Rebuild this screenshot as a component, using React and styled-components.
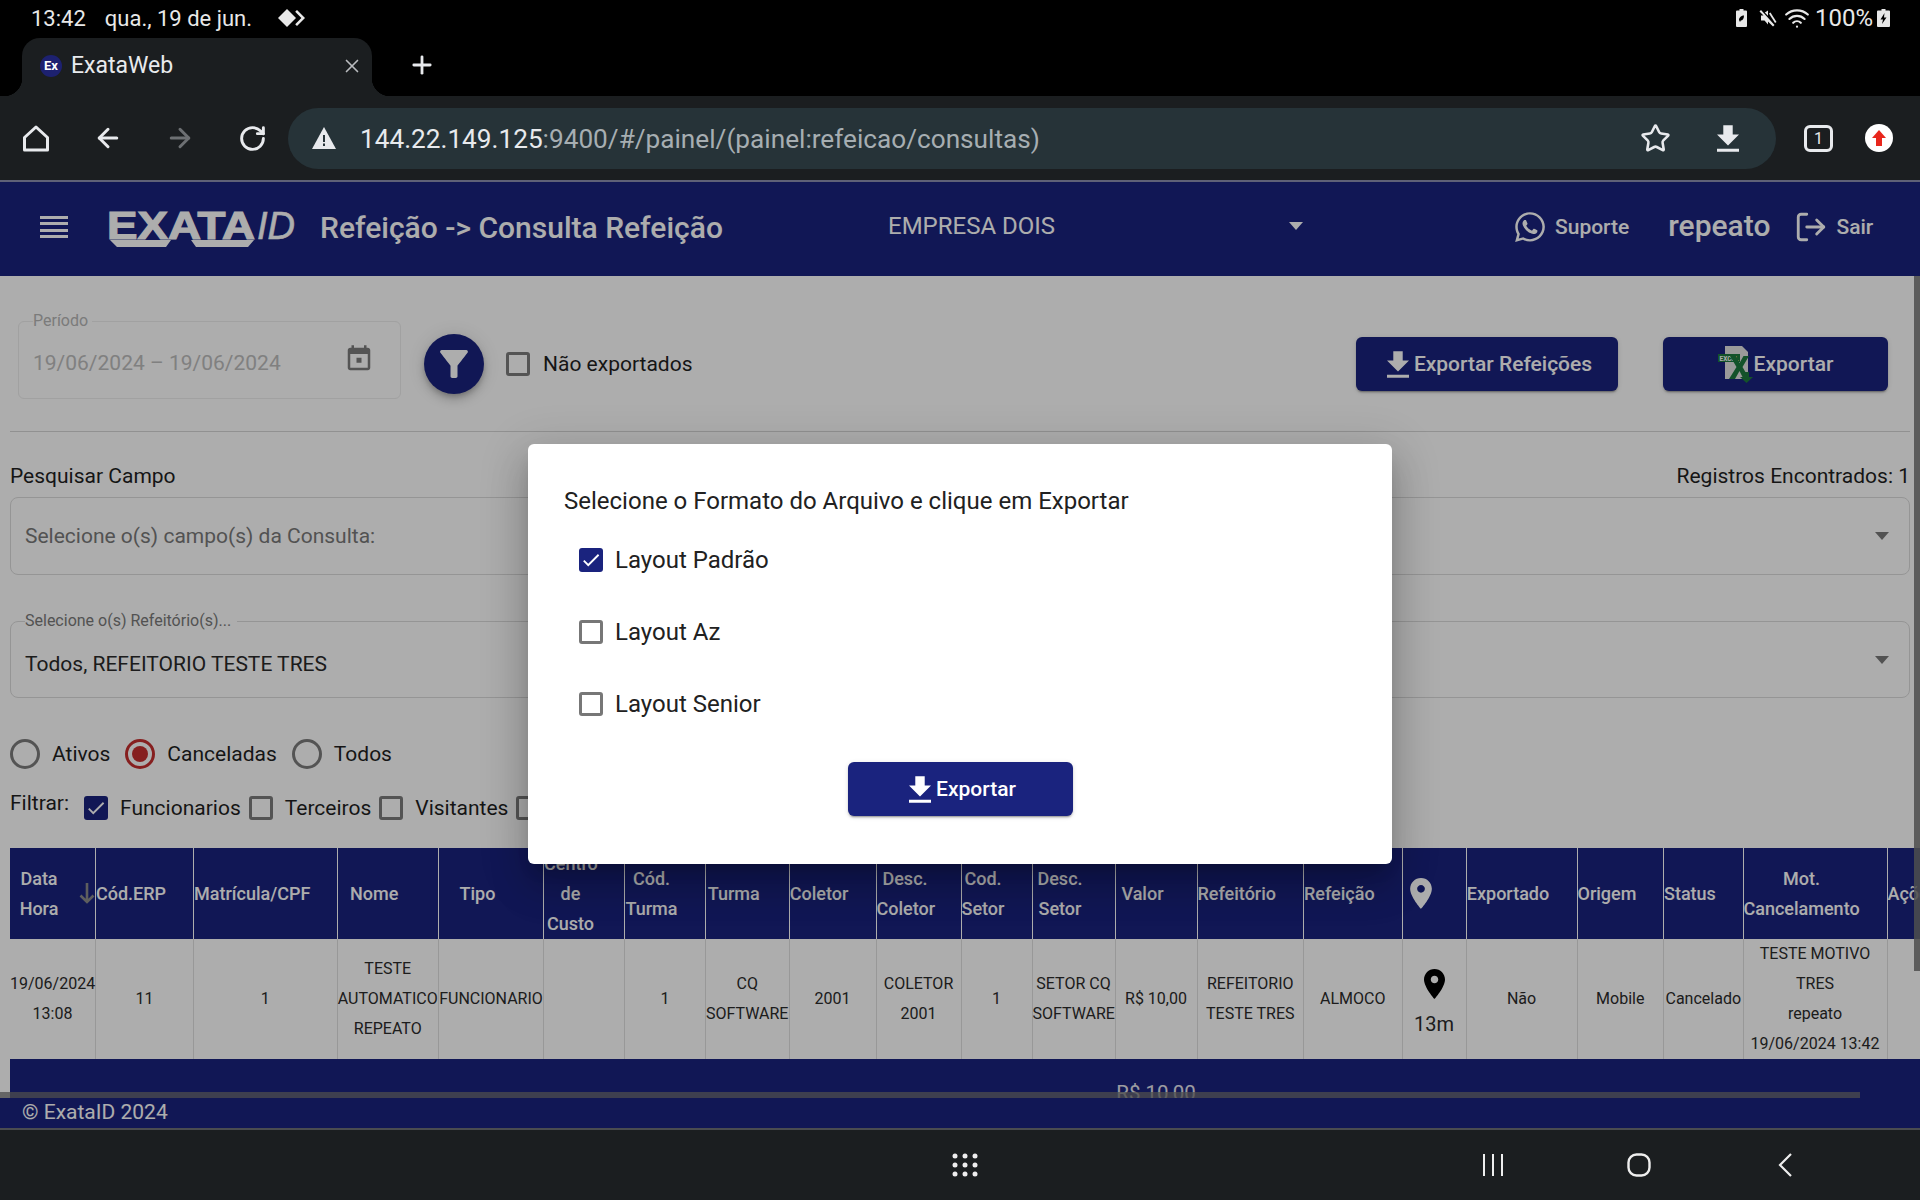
import React from 'react'
import styled, { createGlobalStyle } from 'styled-components'
import { ArrowLeft, ArrowRight, RotateCw, Star, X, Plus, LogOut, Wifi } from 'lucide-react'
import { FaWhatsapp } from 'react-icons/fa'

const GlobalStyle = createGlobalStyle`
  html, body { margin: 0; padding: 0; background: #000; }
  * { box-sizing: border-box; }
  body { font-family: Roboto, "Noto Sans", sans-serif; }
`

const NAVY = '#1a237e'

const columns = [
  { w: 85.5, head: ['Data', 'Hora'], body: ['19/06/2024', '13:08'], sort: true },
  { w: 98, head: ['Cód.ERP'], body: ['11'] },
  { w: 143.5, head: ['Matrícula/CPF'], body: ['1'] },
  { w: 101.5, head: ['Nome'], body: ['TESTE', 'AUTOMATICO', 'REPEATO'] },
  { w: 105, head: ['Tipo'], body: ['FUNCIONARIO'] },
  { w: 81, head: ['Centro', 'de', 'Custo'], body: [] },
  { w: 81, head: ['Cód.', 'Turma'], body: ['1'] },
  { w: 83.5, head: ['Turma'], body: ['CQ', 'SOFTWARE'] },
  { w: 87, head: ['Coletor'], body: ['2001'] },
  { w: 85, head: ['Desc.', 'Coletor'], body: ['COLETOR', '2001'] },
  { w: 71, head: ['Cod.', 'Setor'], body: ['1'] },
  { w: 83, head: ['Desc.', 'Setor'], body: ['SETOR CQ', 'SOFTWARE'] },
  { w: 82, head: ['Valor'], body: ['R$ 10,00'], total: 'R$ 10,00' },
  { w: 106.5, head: ['Refeitório'], body: ['REFEITORIO', 'TESTE TRES'] },
  { w: 98.5, head: ['Refeição'], body: ['ALMOCO'] },
  { w: 64, pin: true },
  { w: 111, head: ['Exportado'], body: ['Não'] },
  { w: 86.5, head: ['Origem'], body: ['Mobile'] },
  { w: 79.5, head: ['Status'], body: ['Cancelado'] },
  { w: 144, head: ['Mot.', 'Cancelamento'], body: ['TESTE MOTIVO', 'TRES', 'repeato', '19/06/2024 13:42'] },
  { w: 76, head: ['Ações'], body: [] },
]

const tableWidth = columns.reduce((sum, c) => sum + c.w, 0)

const Screen = styled.div`
  width: 1920px;
  height: 1200px;
  display: flex;
  flex-direction: column;
  overflow: hidden;
  background: #000;
`

/* tablet status bar */
const StatusBar = styled.div`
  height: 38px;
  flex: none;
  display: flex;
  align-items: center;
  padding: 0 30px 2px 31px;
  color: #e8e8e8;
  font-size: 22px;
`
const StatusDate = styled.span`
  margin-left: 19px;
  margin-right: 26px;
`
const StatusRight = styled.div`
  margin-left: auto;
  display: flex;
  align-items: center;
  gap: 9px;
`
const StatusIcon = styled.svg`
  margin-right: ${p => p.$after || 0}px;
  fill: #e8e8e8;
`
const WifiIcon = styled(Wifi)`
  margin: 0 -2px;
`
const Percent = styled.span`
  margin: 0 -5px 0 -2px;
  font-size: 24px;
`

/* browser */
const TabStrip = styled.div`
  height: 58px;
  flex: none;
  display: flex;
  align-items: stretch;
  padding-left: 22px;
`
const Tab = styled.div`
  position: relative;
  width: 350px;
  display: flex;
  align-items: center;
  padding: 0 9px 3px 18px;
  background: #1b1e20;
  border-radius: 18px 18px 0 0;
  color: #e8eaed;
  font-size: 23px;
  &::before, &::after {
    content: '';
    position: absolute;
    bottom: 0;
    width: 18px;
    height: 18px;
  }
  &::before { left: -18px; background: radial-gradient(circle at 0 0, transparent 18px, #1b1e20 18.5px); }
  &::after { right: -18px; background: radial-gradient(circle at 100% 0, transparent 18px, #1b1e20 18.5px); }
`
const Favicon = styled.span`
  width: 22px;
  height: 22px;
  margin-right: 9px;
  border-radius: 50%;
  background: #1d2170;
  color: #fff;
  font-size: 13px;
  font-weight: 700;
  display: flex;
  align-items: center;
  justify-content: center;
`
const TabClose = styled(X)`
  margin-left: auto;
  color: #b9bcbf;
`
const NewTab = styled(Plus)`
  color: #e8eaed;
  margin: 13px 0 0 36px;
`
const Toolbar = styled.div`
  height: 84px;
  flex: none;
  display: flex;
  align-items: center;
  background: #1b1e20;
`
const ToolIcon = styled.span`
  flex: none;
  display: flex;
  justify-content: center;
  width: 72px;
  color: ${p => p.$off ? '#6d7073' : '#e8eaed'};
`
const UrlBar = styled.div`
  width: 1488px;
  height: 61px;
  flex: none;
  display: flex;
  align-items: center;
  margin-right: 7px;
  padding: 0 37px 0 24px;
  border-radius: 31px;
  background: #263338;
  font-size: 26.2px;
  color: #a6aeb2;
`
const UrlHost = styled.span`
  color: #e8eaed;
`
const UrlText = styled.span`
  margin: 1px 0 0 24px;
`
const UrlActions = styled.div`
  margin-left: auto;
  display: flex;
  align-items: center;
  gap: 46px;
  color: #e8eaed;
`
const TabCount = styled.span`
  width: 29px;
  height: 27px;
  margin-left: 21px;
  flex: none;
  display: flex;
  align-items: center;
  justify-content: center;
  border: 3px solid #e8eaed;
  border-radius: 6px;
  color: #e8eaed;
  font-size: 16px;
`
const Avatar = styled.span`
  width: 28px;
  height: 28px;
  margin-left: 32px;
  flex: none;
  display: flex;
  align-items: center;
  justify-content: center;
  border-radius: 50%;
  background: #fff;
  color: #e8261c;
`

/* web app */
const AppArea = styled.div`
  position: relative;
  flex: 1;
  min-height: 0;
  display: flex;
  flex-direction: column;
  background: #fff;
`
const Overlay = styled.div`
  position: absolute;
  inset: 0;
  z-index: 5;
  display: flex;
  align-items: center;
  justify-content: center;
  background: rgba(0, 0, 0, 0.32);
`
const AppHeader = styled.header`
  height: 96px;
  flex: none;
  display: flex;
  align-items: center;
  padding-bottom: 4px;
  border-top: 2px solid #8d90b0;
  background: ${NAVY};
  color: #fff;
`
const Burger = styled.span`
  width: 28px;
  height: 22px;
  margin-left: 40px;
  flex: none;
  background: repeating-linear-gradient(to bottom, #fff 0 3px, transparent 3px 6.3px);
`
const Logo = styled.svg`
  width: 190px;
  height: 40px;
  margin: 4px 0 0 39px;
  flex: none;
  fill: #fff;
  overflow: visible;
`
const PageTitle = styled.h1`
  margin: 0 0 0 23px;
  width: 568px;
  flex: none;
  font-size: 30px;
  font-weight: 500;
  white-space: nowrap;
`
const Company = styled.div`
  width: 415px;
  flex: none;
  display: flex;
  align-items: center;
  justify-content: space-between;
  margin-top: -2px;
  font-size: 24px;
`
const Caret = styled.span`
  width: 0;
  height: 0;
  border-left: 7px solid transparent;
  border-right: 7px solid transparent;
  border-top: 8px solid ${p => p.$color || '#fff'};
`
const HeaderLink = styled.span`
  display: flex;
  align-items: center;
  gap: 8px;
  font-size: 21px;
  font-weight: 500;
`
const SupportLink = styled(HeaderLink)`
  margin-left: 210px;
`
const UserName = styled.span`
  margin-left: 39px;
  margin-top: -4px;
  font-size: 30px;
  font-weight: 500;
`
const ExitLink = styled(HeaderLink)`
  margin-left: 24px;
`

const Content = styled.main`
  position: relative;
  flex: 1;
  min-height: 0;
  overflow: hidden;
  padding: 0 10px;
  color: #1f1f1f;
  font-size: 21px;
`
const TopRow = styled.div`
  display: flex;
  align-items: flex-start;
  padding: 45px 22px 32px 8px;
  border-bottom: 1px solid #d6d6d6;
`
const PeriodBox = styled.div`
  position: relative;
  width: 383px;
  height: 78px;
  flex: none;
  display: flex;
  align-items: center;
  justify-content: space-between;
  padding: 5px 26px 0 14px;
  border: 1px solid #ededed;
  border-radius: 6px;
  color: #bdbdbd;
`
const FloatLabel = styled.span`
  position: absolute;
  top: -10px;
  left: ${p => p.$left || 14}px;
  padding: 0 ${p => p.$pad || 4}px 0 0;
  background: #fff;
  font-size: 16px;
  line-height: 18px;
  color: ${p => p.$color || '#b5b5b5'};
`
const CalendarIcon = styled.svg`
  margin-top: -7px;
  fill: #7c7c7c;
`
const FilterButton = styled.span`
  width: 60px;
  height: 60px;
  margin: 13px 0 0 23px;
  flex: none;
  display: flex;
  align-items: center;
  justify-content: center;
  border-radius: 50%;
  background: ${NAVY};
  color: #fff;
  box-shadow: 0 3px 5px -1px rgba(0,0,0,.2), 0 6px 10px rgba(0,0,0,.14), 0 1px 18px rgba(0,0,0,.12);
`
const NotExported = styled.label`
  margin: 31px 0 0 22px;
  display: flex;
  align-items: center;
  gap: 13px;
`
const BoxMark = styled.span`
  width: 24px;
  height: 24px;
  flex: none;
  display: flex;
  align-items: center;
  justify-content: center;
  border-radius: 3px;
  border: ${p => p.$checked ? 'none' : `3px solid ${p.$edge || '#7c7c7c'}`};
  background: ${p => p.$checked ? NAVY : 'transparent'};
  color: #fff;
`
const ActionGroup = styled.div`
  margin: 16px 0 0 auto;
  display: flex;
  gap: 45px;
`
const NavyButton = styled.button`
  width: ${p => p.$w}px;
  height: 54px;
  display: flex;
  align-items: center;
  justify-content: center;
  gap: ${p => p.$gap ?? 5}px;
  padding: 0 0 0 ${p => p.$pad ?? 5}px;
  border: none;
  border-radius: 6px;
  background: ${NAVY};
  color: #fff;
  font-family: inherit;
  font-size: 21px;
  font-weight: 500;
  box-shadow: 0 3px 1px -2px rgba(0,0,0,.2), 0 2px 2px rgba(0,0,0,.14), 0 1px 5px rgba(0,0,0,.12);
`
const SearchHead = styled.div`
  display: flex;
  justify-content: space-between;
  padding: 32px 0 9px;
  line-height: 24px;
`
const SelectBox = styled.div`
  position: relative;
  height: ${p => p.$h}px;
  margin-top: ${p => p.$top || 0}px;
  display: flex;
  align-items: center;
  justify-content: space-between;
  padding: ${p => p.$drop || 0}px 20px 0 14px;
  border: 1px solid #dcdcdc;
  border-radius: 8px;
  color: ${p => p.$muted ? '#7a7a7a' : '#2a2a2a'};
`
const SelectCaret = styled(Caret)`
  margin-top: ${p => -(p.$drop || 0)}px;
`
const RadioRow = styled.div`
  display: flex;
  align-items: center;
  margin-top: 41px;
  height: 30px;
`
const RadioItem = styled.label`
  display: flex;
  align-items: center;
  gap: 12px;
  margin-right: 15px;
`
const RadioMark = styled.span`
  width: 30px;
  height: 30px;
  display: flex;
  align-items: center;
  justify-content: center;
  border-radius: 50%;
  border: 3px solid ${p => p.$on ? '#c62f2f' : '#7c7c7c'};
  &::after {
    content: '';
    width: 16px;
    height: 16px;
    border-radius: 50%;
    background: ${p => p.$on ? '#c62f2f' : 'transparent'};
  }
`
const FilterRow = styled.div`
  display: flex;
  align-items: center;
  margin-top: 24px;
  height: 30px;
`
const FilterLabel = styled.span`
  margin: -10px 15px 0 0;
`
const CheckItem = styled.label`
  display: flex;
  align-items: center;
  gap: 12px;
  margin-right: 8px;
`
const TableWrap = styled.div`
  margin-top: 25px;
`
const Table = styled.table`
  table-layout: fixed;
  border-collapse: collapse;
  font-size: 16px;
`
const HeadCell = styled.th`
  position: relative;
  height: 91px;
  padding: 0 27px 0 0;
  background: ${NAVY};
  border-left: 1px solid #fff;
  color: #fff;
  font-size: 18px;
  font-weight: 500;
  line-height: 30px;
  white-space: nowrap;
  &:first-child { border-left: none; }
`
const BodyCell = styled.td`
  height: 120px;
  padding: 0;
  border-left: 1px solid #e0e0e0;
  color: #2b2b2b;
  text-align: center;
  line-height: 30px;
  white-space: nowrap;
  &:first-child { border-left: none; }
`
const TotalCell = styled.td`
  height: 68px;
  padding: 0;
  background: ${NAVY};
  color: #e6e6ee;
  font-size: 20.5px;
  text-align: center;
  white-space: nowrap;
`
const Line = styled.div``
const SortArrow = styled.svg`
  position: absolute;
  right: 0;
  top: 34px;
  color: #8b8b8b;
`
const Distance = styled.div`
  margin: 10px 0 -10px;
  font-size: 20px;
  line-height: 30px;
`
const PinShape = styled.svg`
  display: block;
  margin: 0 auto;
`
const HScroll = styled.div`
  position: absolute;
  left: 0;
  bottom: 0;
  width: 1860px;
  height: 6px;
  background: rgba(115, 115, 115, 0.75);
`
const VScroll = styled.div`
  position: absolute;
  right: 0;
  top: 0;
  width: 6px;
  height: 695px;
  background: rgba(115, 115, 115, 0.85);
`
const AppFooter = styled.footer`
  height: 30px;
  flex: none;
  display: flex;
  align-items: center;
  padding: 0 0 2px 22px;
  background: ${NAVY};
  color: #fff;
  font-size: 21px;
`

/* dialog */
const Dialog = styled.div`
  width: 864px;
  height: 420px;
  padding: 40px 36px 0;
  border-radius: 6px;
  background: #fff;
  color: #212121;
  box-shadow: 0 11px 15px -7px rgba(0,0,0,.2), 0 24px 38px 3px rgba(0,0,0,.14), 0 9px 46px 8px rgba(0,0,0,.12);
`
const DialogTitle = styled.div`
  font-size: 24px;
  line-height: 34px;
`
const OptionList = styled.div`
  margin-top: 30px;
  padding-left: 15px;
  display: flex;
  flex-direction: column;
  gap: 48px;
`
const Option = styled.label`
  height: 24px;
  display: flex;
  align-items: center;
  gap: 12px;
  font-size: 24px;
`
const DialogFoot = styled.div`
  margin-top: 46px;
  display: flex;
  justify-content: center;
`

/* android nav bar */
const NavBar = styled.div`
  height: 72px;
  flex: none;
  display: flex;
  align-items: center;
  padding-left: 952px;
  border-top: 2px solid #4a4c50;
  background: #1b1e20;
  color: #eee;
`
const NavIcon = styled.svg`
  margin-left: ${p => p.$gap || 0}px;
  flex: none;
`

const DownloadIcon = () => (
  <svg width="22" height="27" viewBox="5 3 14 17" fill="currentColor">
    <path d="M19 9h-4V3H9v6H5l7 7 7-7zM5 18v2h14v-2H5z" />
  </svg>
)

const CheckMark = () => (
  <svg width="22" height="22" viewBox="0 0 24 24" fill="currentColor">
    <path d="M9 16.17L4.83 12l-1.42 1.41L9 19 21 7l-1.41-1.41z" />
  </svg>
)

const Pin = ({ w, h, color }) => (
  <PinShape width={w} height={h} viewBox="5 2 14 20" fill={color}>
    <path d="M12 2C8.13 2 5 5.13 5 9c0 5.25 7 13 7 13s7-7.75 7-13c0-3.87-3.13-7-7-7zm0 9.5c-1.38 0-2.5-1.12-2.5-2.5s1.12-2.5 2.5-2.5 2.5 1.12 2.5 2.5-1.12 2.5-2.5 2.5z" />
  </PinShape>
)

const ExcelIcon = () => (
  <svg width="36" height="38" viewBox="0 0 36 38">
    <path d="M7 1h17l6 6v27H7z" fill="#e4e4e4" />
    <rect x="0" y="9" width="22" height="8" fill="#1d7a3e" />
    <text x="1.5" y="15.5" fontSize="6.5" fontWeight="700" fontFamily="Roboto, sans-serif" fill="#fff">EXCEL</text>
    <path d="M12 11h6l3.500 7 4-7h5.500l-6.500 11 7 12h-6l-4-8-4.500 8h-6l7.500-12z" fill="#1d7a3e" />
    <path d="M26 27h5v5h4l-6.500 6-6.500-6h4z" fill="#1d7a3e" />
  </svg>
)

const Check = ({ checked, edge }) => (
  <BoxMark $checked={checked} $edge={edge}>{checked && <CheckMark />}</BoxMark>
)

function App() {
  return (
    <Screen>
      <GlobalStyle />
      <StatusBar>
        13:42
        <StatusDate>qua., 19 de jun.</StatusDate>
        <svg width="28" height="18" viewBox="0 0 28 18" fill="#e8e8e8">
          <path d="M9 0l9 9-9 9-9-9z" />
          <path d="M19 1l8 8-8 8-1.800-1.800L23.400 9 17.200 2.800z" />
        </svg>
        <StatusRight>
          <StatusIcon $after={3} width="11" height="18" viewBox="0 0 11 18">
            <path d="M3.500 0h4v1.500H10a1 1 0 0 1 1 1V17a1 1 0 0 1-1 1H1a1 1 0 0 1-1-1V2.500a1 1 0 0 1 1-1h2.500z" />
            <path d="M3 11c0-2.500 2.500-4.500 5-4.500C8 10 6.500 11.500 4.800 11.500L4 13z" fill="#000" />
          </StatusIcon>
          <StatusIcon width="18" height="18" viewBox="0 0 18 18">
            <path d="M9 1.500v5.200L5.800 3.500zM3 6.500L14 17.500l1.500-1.500L2 1 .5 2.500l4 4H2v5h3.500L9 15.500v-6z" />
            <path d="M11.500 3.500l6 9.500-1.500 1-6-9.500z" />
          </StatusIcon>
          <WifiIcon size={26} strokeWidth={2} />
          <Percent>100%</Percent>
          <StatusIcon width="13" height="18" viewBox="0 0 13 18">
            <path d="M4.500 0h4v1.500H12a1 1 0 0 1 1 1V17a1 1 0 0 1-1 1H1a1 1 0 0 1-1-1V2.500a1 1 0 0 1 1-1h3.500z" />
            <path d="M7.500 4L3.500 10.500h2.500L5 15l4.500-6.500H7z" fill="#000" />
          </StatusIcon>
        </StatusRight>
      </StatusBar>

      <TabStrip>
        <Tab>
          <Favicon>Ex</Favicon>
          ExataWeb
          <TabClose size={22} strokeWidth={1.8} />
        </Tab>
        <NewTab size={28} strokeWidth={2.4} />
      </TabStrip>

      <Toolbar>
        <ToolIcon>
          <svg width="28" height="28" viewBox="0 0 28 28" fill="none" stroke="currentColor" strokeWidth="3" strokeLinejoin="round">
            <path d="M14 3L2.500 13.500V26h23V13.500z" />
          </svg>
        </ToolIcon>
        <ToolIcon><ArrowLeft size={30} strokeWidth={2.4} /></ToolIcon>
        <ToolIcon $off><ArrowRight size={30} strokeWidth={2.4} /></ToolIcon>
        <ToolIcon><RotateCw size={29} strokeWidth={2.4} /></ToolIcon>
        <UrlBar>
          <svg width="24" height="22" viewBox="0 0 24 22">
            <path d="M12 0l12 22H0z" fill="#e8eaed" />
            <path d="M11 8h2v7h-2zM11 16.500h2v2.500h-2z" fill="#263338" />
          </svg>
          <UrlText><UrlHost>144.22.149.125</UrlHost>:9400/#/painel/(painel:refeicao/consultas)</UrlText>
          <UrlActions>
            <Star size={31} strokeWidth={2} />
            <DownloadIcon />
          </UrlActions>
        </UrlBar>
        <TabCount>1</TabCount>
        <Avatar>
          <svg width="14" height="16" viewBox="0 0 14 16" fill="currentColor">
            <path d="M7 0l7 8H10v8H4V8H0z" />
          </svg>
        </Avatar>
      </Toolbar>

      <AppArea>
        <AppHeader>
          <Burger />
          <Logo viewBox="0 0 190 40">
            <text x="0" y="30" stroke="#fff" strokeWidth="1.2" fontFamily="'Liberation Sans', sans-serif" fontWeight="700" fontSize="39" textLength="148" lengthAdjust="spacingAndGlyphs">EXATA</text>
            <text x="150" y="30" stroke="#fff" strokeWidth="0.6" fontFamily="'Liberation Sans', sans-serif" fontStyle="italic" fontSize="39" textLength="38" lengthAdjust="spacingAndGlyphs">ID</text>
            <path d="M3 31h61l-5 7H10zM84 31h63l-6 7H89z" />
          </Logo>
          <PageTitle>Refeição -&gt; Consulta Refeição</PageTitle>
          <Company>
            EMPRESA DOIS
            <Caret />
          </Company>
          <SupportLink><FaWhatsapp size={34} />Suporte</SupportLink>
          <UserName>repeato</UserName>
          <ExitLink><LogOut size={34} strokeWidth={2} />Sair</ExitLink>
        </AppHeader>

        <Content>
          <TopRow>
            <PeriodBox>
              <FloatLabel>Período</FloatLabel>
              19/06/2024 – 19/06/2024
              <CalendarIcon width="30" height="32" viewBox="0 0 24 24">
                <path d="M19 3h-1V1h-2v2H8V1H6v2H5c-1.100 0-2 .9-2 2v14c0 1.100.9 2 2 2h14c1.100 0 2-.9 2-2V5c0-1.100-.9-2-2-2zm0 16H5V8h14v11zM10 11h4v4h-4z" />
              </CalendarIcon>
            </PeriodBox>
            <FilterButton>
              <svg width="42" height="42" viewBox="0 0 24 24" fill="currentColor">
                <path d="M4.250 5.610C6.270 8.200 10 13 10 13v6c0 .55.45 1 1 1h2c.55 0 1-.45 1-1v-6s3.720-4.800 5.740-7.390C20.250 4.950 19.780 4 18.950 4H5.040c-.83 0-1.300.95-.79 1.610z" />
              </svg>
            </FilterButton>
            <NotExported><Check />Não exportados</NotExported>
            <ActionGroup>
              <NavyButton $w={262}><DownloadIcon />Exportar Refeições</NavyButton>
              <NavyButton $w={225} $gap={0} $pad={0}><ExcelIcon />Exportar</NavyButton>
            </ActionGroup>
          </TopRow>

          <SearchHead>
            <span>Pesquisar Campo</span>
            <span>Registros Encontrados: 1</span>
          </SearchHead>
          <SelectBox $h={78} $muted>
            Selecione o(s) campo(s) da Consulta:
            <Caret $color="#7a7a7a" />
          </SelectBox>
          <SelectBox $h={77} $top={46} $drop={8}>
            <FloatLabel $left={14} $pad={6} $color="#7a7a7a">Selecione o(s) Refeitório(s)...</FloatLabel>
            Todos, REFEITORIO TESTE TRES
            <SelectCaret $drop={8} $color="#7a7a7a" />
          </SelectBox>

          <RadioRow>
            <RadioItem><RadioMark />Ativos</RadioItem>
            <RadioItem><RadioMark $on />Canceladas</RadioItem>
            <RadioItem><RadioMark />Todos</RadioItem>
          </RadioRow>
          <FilterRow>
            <FilterLabel>Filtrar:</FilterLabel>
            <CheckItem><Check checked />Funcionarios</CheckItem>
            <CheckItem><Check />Terceiros</CheckItem>
            <CheckItem><Check />Visitantes</CheckItem>
            <CheckItem><Check /></CheckItem>
          </FilterRow>

          <TableWrap>
            <Table style={{ width: tableWidth }}>
              <colgroup>
                {columns.map((c, i) => <col key={i} style={{ width: c.w }} />)}
              </colgroup>
              <thead>
                <tr>
                  {columns.map((c, i) => (
                    <HeadCell key={i}>
                      {c.pin ? <Pin w={22} h={31} color="#fff" /> : c.head.map(t => <Line key={t}>{t}</Line>)}
                      {c.sort && (
                        <SortArrow width="16" height="22" viewBox="0 0 16 22" fill="none" stroke="currentColor" strokeWidth="2.600">
                          <path d="M8 1v19M1.500 13.500L8 20l6.500-6.500" />
                        </SortArrow>
                      )}
                    </HeadCell>
                  ))}
                </tr>
              </thead>
              <tbody>
                <tr>
                  {columns.map((c, i) => (
                    <BodyCell key={i}>
                      {c.pin ? (
                        <>
                          <Pin w={21} h={30} color="#000" />
                          <Distance>13m</Distance>
                        </>
                      ) : c.body.map(t => <Line key={t}>{t}</Line>)}
                    </BodyCell>
                  ))}
                </tr>
                <tr>
                  {columns.map((c, i) => <TotalCell key={i}>{c.total}</TotalCell>)}
                </tr>
              </tbody>
            </Table>
          </TableWrap>
          <VScroll />
          <HScroll />
        </Content>

        <AppFooter>© ExataID 2024</AppFooter>

        <Overlay>
          <Dialog>
            <DialogTitle>Selecione o Formato do Arquivo e clique em Exportar</DialogTitle>
            <OptionList>
              <Option><Check checked />Layout Padrão</Option>
              <Option><Check edge="#777" />Layout Az</Option>
              <Option><Check edge="#777" />Layout Senior</Option>
            </OptionList>
            <DialogFoot>
              <NavyButton $w={225}><DownloadIcon />Exportar</NavyButton>
            </DialogFoot>
          </Dialog>
        </Overlay>
      </AppArea>

      <NavBar>
        <NavIcon width="26" height="24" viewBox="0 0 26 24" fill="#eee">
          {[3, 13, 23].flatMap(x => [3, 12, 21].map(y => <circle key={`${x}-${y}`} cx={x} cy={y} r="2.500" />))}
        </NavIcon>
        <NavIcon $gap={504} width="22" height="24" viewBox="0 0 22 24" stroke="#eee" strokeWidth="2">
          <path d="M2 1v22M11 1v22M20 1v22" />
        </NavIcon>
        <NavIcon $gap={123} width="24" height="24" viewBox="0 0 24 24" fill="none" stroke="#eee" strokeWidth="2.400">
          <rect x="1.500" y="1.500" width="21" height="21" rx="8" />
        </NavIcon>
        <NavIcon $gap={127} width="15" height="24" viewBox="0 0 15 24" fill="none" stroke="#eee" strokeWidth="2.200">
          <path d="M13 1L2 12l11 11" />
        </NavIcon>
      </NavBar>
    </Screen>
  )
}

export default App
